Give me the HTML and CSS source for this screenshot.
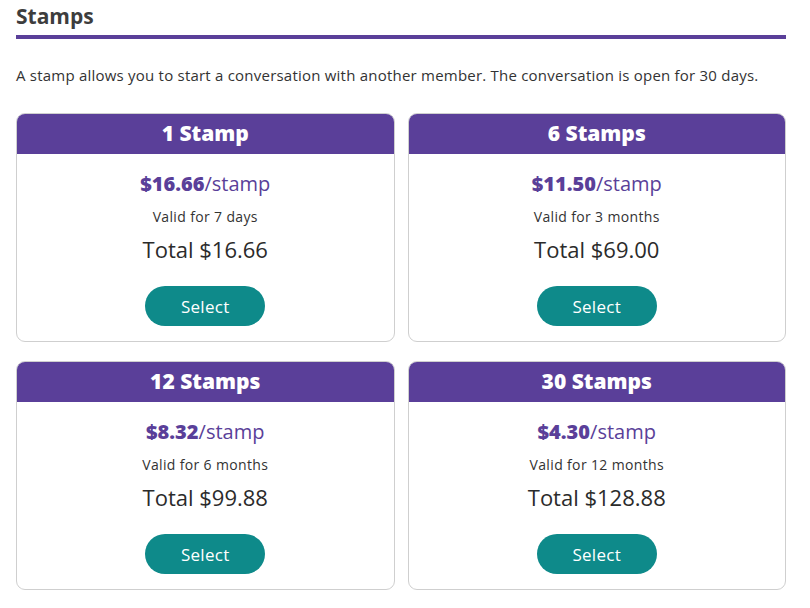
FILE: index.html
```html
<!DOCTYPE html>
<html>
<head>
<meta charset="utf-8">
<link rel="stylesheet" href="styles.css">
</head>
<body>
<div class="page">
  <h1 class="title">Stamps</h1>
  <p class="intro">A stamp allows you to start a conversation with another member. The conversation is open for 30 days.</p>
  <div class="grid">
    <div class="card">
      <div class="card-head">1 Stamp</div>
      <div class="card-body">
        <div class="price"><b>$16.66</b>/stamp</div>
        <div class="valid">Valid for 7 days</div>
        <div class="total">Total $16.66</div>
        <button class="select">Select</button>
      </div>
    </div>
    <div class="card">
      <div class="card-head">6 Stamps</div>
      <div class="card-body">
        <div class="price"><b>$11.50</b>/stamp</div>
        <div class="valid">Valid for 3 months</div>
        <div class="total">Total $69.00</div>
        <button class="select">Select</button>
      </div>
    </div>
    <div class="card">
      <div class="card-head">12 Stamps</div>
      <div class="card-body">
        <div class="price"><b>$8.32</b>/stamp</div>
        <div class="valid">Valid for 6 months</div>
        <div class="total">Total $99.88</div>
        <button class="select">Select</button>
      </div>
    </div>
    <div class="card">
      <div class="card-head">30 Stamps</div>
      <div class="card-body">
        <div class="price"><b>$4.30</b>/stamp</div>
        <div class="valid">Valid for 12 months</div>
        <div class="total">Total $128.88</div>
        <button class="select">Select</button>
      </div>
    </div>
  </div>
</div>
</body>
</html>
```
FILE: styles.css
```css
* { box-sizing: border-box; }
body {
  margin: 0;
  background: #fff;
  font-family: "Open Sans", "Noto Sans", sans-serif;
  color: #333;
}
.page {
  padding: 0 24px 0 16px;
}
.title {
  margin: 0;
  padding-top: 2px;
  font-size: 21px;
  line-height: 28px;
  font-weight: 700;
  color: #3d3d3d;
  padding-bottom: 5px;
  border-bottom: 4px solid #5a3f99;
}
.intro {
  margin: 26px 0 28px;
  font-size: 15px;
  line-height: 20px;
  letter-spacing: 0.22px;
  color: #333;
}
.grid {
  display: grid;
  grid-template-columns: 1fr 1fr;
  column-gap: 13px;
  row-gap: 19px;
}
.card {
  border: 1px solid #cfcfcf;
  border-radius: 9px;
  overflow: hidden;
}
.card-head {
  background: #5a3f99;
  color: #fff;
  text-align: center;
  font-size: 21px;
  font-weight: 800;
  height: 40px;
  line-height: 39px;
}
.card-body {
  display: flex;
  flex-direction: column;
  align-items: center;
  padding: 17px 0 15px;
}
.price {
  font-size: 20px;
  line-height: 26px;
  color: #5a3f99;
}
.price b { font-weight: 800; }
.valid {
  margin-top: 11px;
  font-size: 14px;
  line-height: 18px;
  letter-spacing: 0.35px;
  color: #333;
}
.total {
  margin-top: 8px;
  font-size: 22px;
  line-height: 30px;
  color: #2b2b2b;
}
.select {
  margin-top: 22px;
  width: 120px;
  height: 40px;
  border: none;
  border-radius: 20px;
  background: #0e8a8a;
  color: #fff;
  font-family: inherit;
  font-size: 17px;
  letter-spacing: 0.3px;
}
```
